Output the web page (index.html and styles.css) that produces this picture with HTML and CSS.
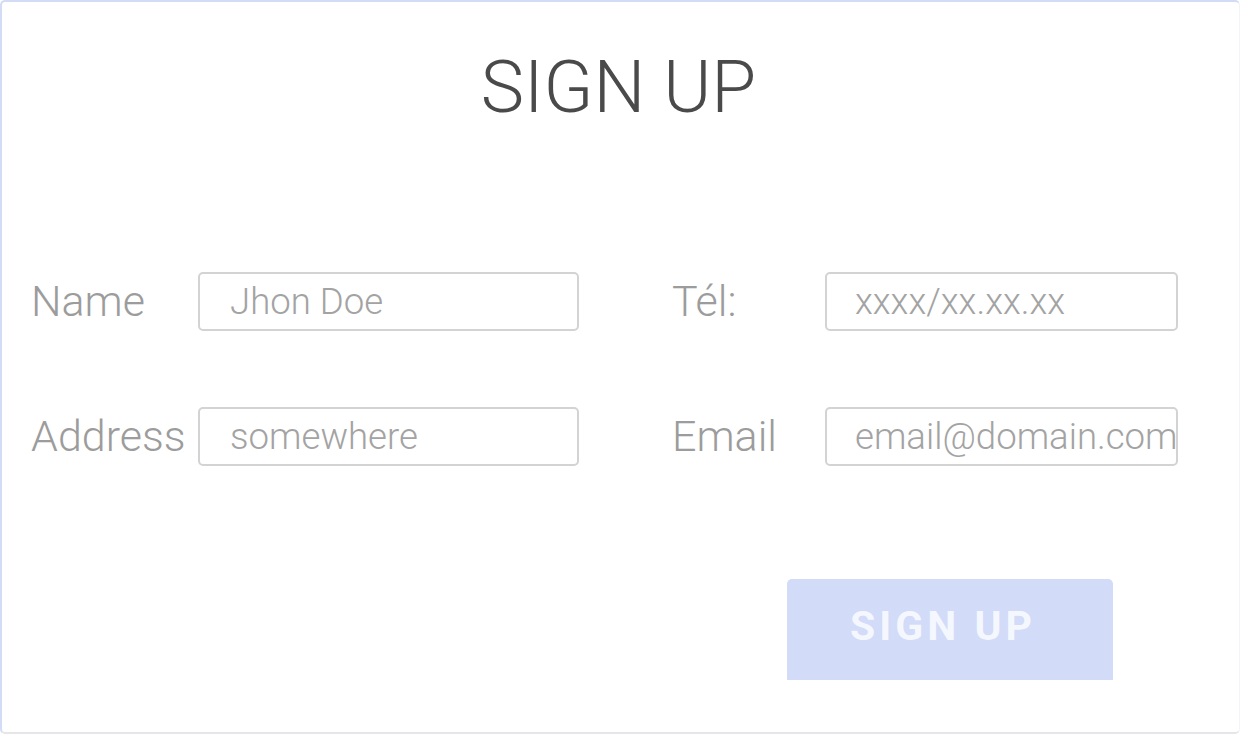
FILE: index.html
```html
<!DOCTYPE html>
<html lang="fr">
<head>
<meta charset="utf-8">
<title>Sign up</title>
<link rel="stylesheet" href="styles.css">
</head>
<body>
<main class="card">
  <h1 class="title">SIGN UP</h1>
  <form class="form">
    <div class="row">
      <div class="field field-left">
        <label class="label" for="name">Name</label>
        <input class="input" id="name" type="text" placeholder="Jhon Doe">
      </div>
      <div class="field field-right">
        <label class="label" for="tel">Tél:</label>
        <input class="input" id="tel" type="text" placeholder="xxxx/xx.xx.xx">
      </div>
    </div>
    <div class="row">
      <div class="field field-left">
        <label class="label" for="address">Address</label>
        <input class="input" id="address" type="text" placeholder="somewhere">
      </div>
      <div class="field field-right">
        <label class="label" for="email">Email</label>
        <input class="input" id="email" type="text" placeholder="email@domain.com">
      </div>
    </div>
    <div class="actions">
      <button class="btn" type="button">SIGN UP</button>
    </div>
  </form>
</main>
</body>
</html>
```

FILE: styles.css
```css
* { box-sizing: border-box; }

html, body {
  margin: 0;
  padding: 0;
  background: #ffffff;
}

body {
  font-family: Roboto, "Liberation Sans", sans-serif;
  width: 1240px;
  height: 734px;
  overflow: hidden;
}

.card {
  width: 1240px;
  height: 734px;
  border-top: 2px solid #d3dcf7;
  border-left: 2px solid #d3dcf7;
  border-bottom: 2px solid #e6e6e8;
  border-right: 1px solid #f3f4f9;
  border-radius: 5px;
  padding: 42px 0 0 31px;
  display: flex;
  flex-direction: column;
}

.title {
  margin: 0;
  font-weight: 300;
  font-size: 73px;
  color: #4a4a4a;
  text-align: center;
  padding-right: 35px;
  line-height: normal;
}

.form {
  display: flex;
  flex-direction: column;
  margin-top: 142px;
}

.row {
  display: flex;
  align-items: center;
  margin-bottom: 76px;
}

.row + .row {
  margin-bottom: 113px;
}

.field {
  display: flex;
  align-items: center;
}

.field-left .label { width: 167px; margin-left: -2px; }
.field-left .input { width: 381px; padding-left: 30px; }

.field-right { margin-left: 93px; }
.field-right .label { width: 153px; }
.field-right .input { width: 353px; padding-left: 28px; }

.label {
  font-weight: 300;
  font-size: 43px;
  color: #9c9c9c;
  margin-bottom: 2px;
  line-height: normal;
  white-space: nowrap;
}

.input {
  height: 59px;
  border: 2px solid #d3d3d3;
  border-radius: 5px;
  padding: 0 0 0 31px;
  font-family: Roboto, "Liberation Sans", sans-serif;
  font-weight: 300;
  font-size: 36.6px;
  color: #9b9b9b;
  background: #ffffff;
  outline: none;
}

.input::placeholder {
  color: #a3a3a3;
  opacity: 1;
}

.actions {
  display: flex;
  padding-left: 754px;
}

.btn {
  width: 326px;
  height: 101px;
  border: none;
  border-radius: 5px 5px 0 0;
  background: #d2dbf7;
  color: #f5f7fe;
  font-family: Roboto, "Liberation Sans", sans-serif;
  font-weight: 700;
  font-size: 41px;
  letter-spacing: 4px;
  padding: 0 14px 8px 0;
  text-align: center;
}
```
